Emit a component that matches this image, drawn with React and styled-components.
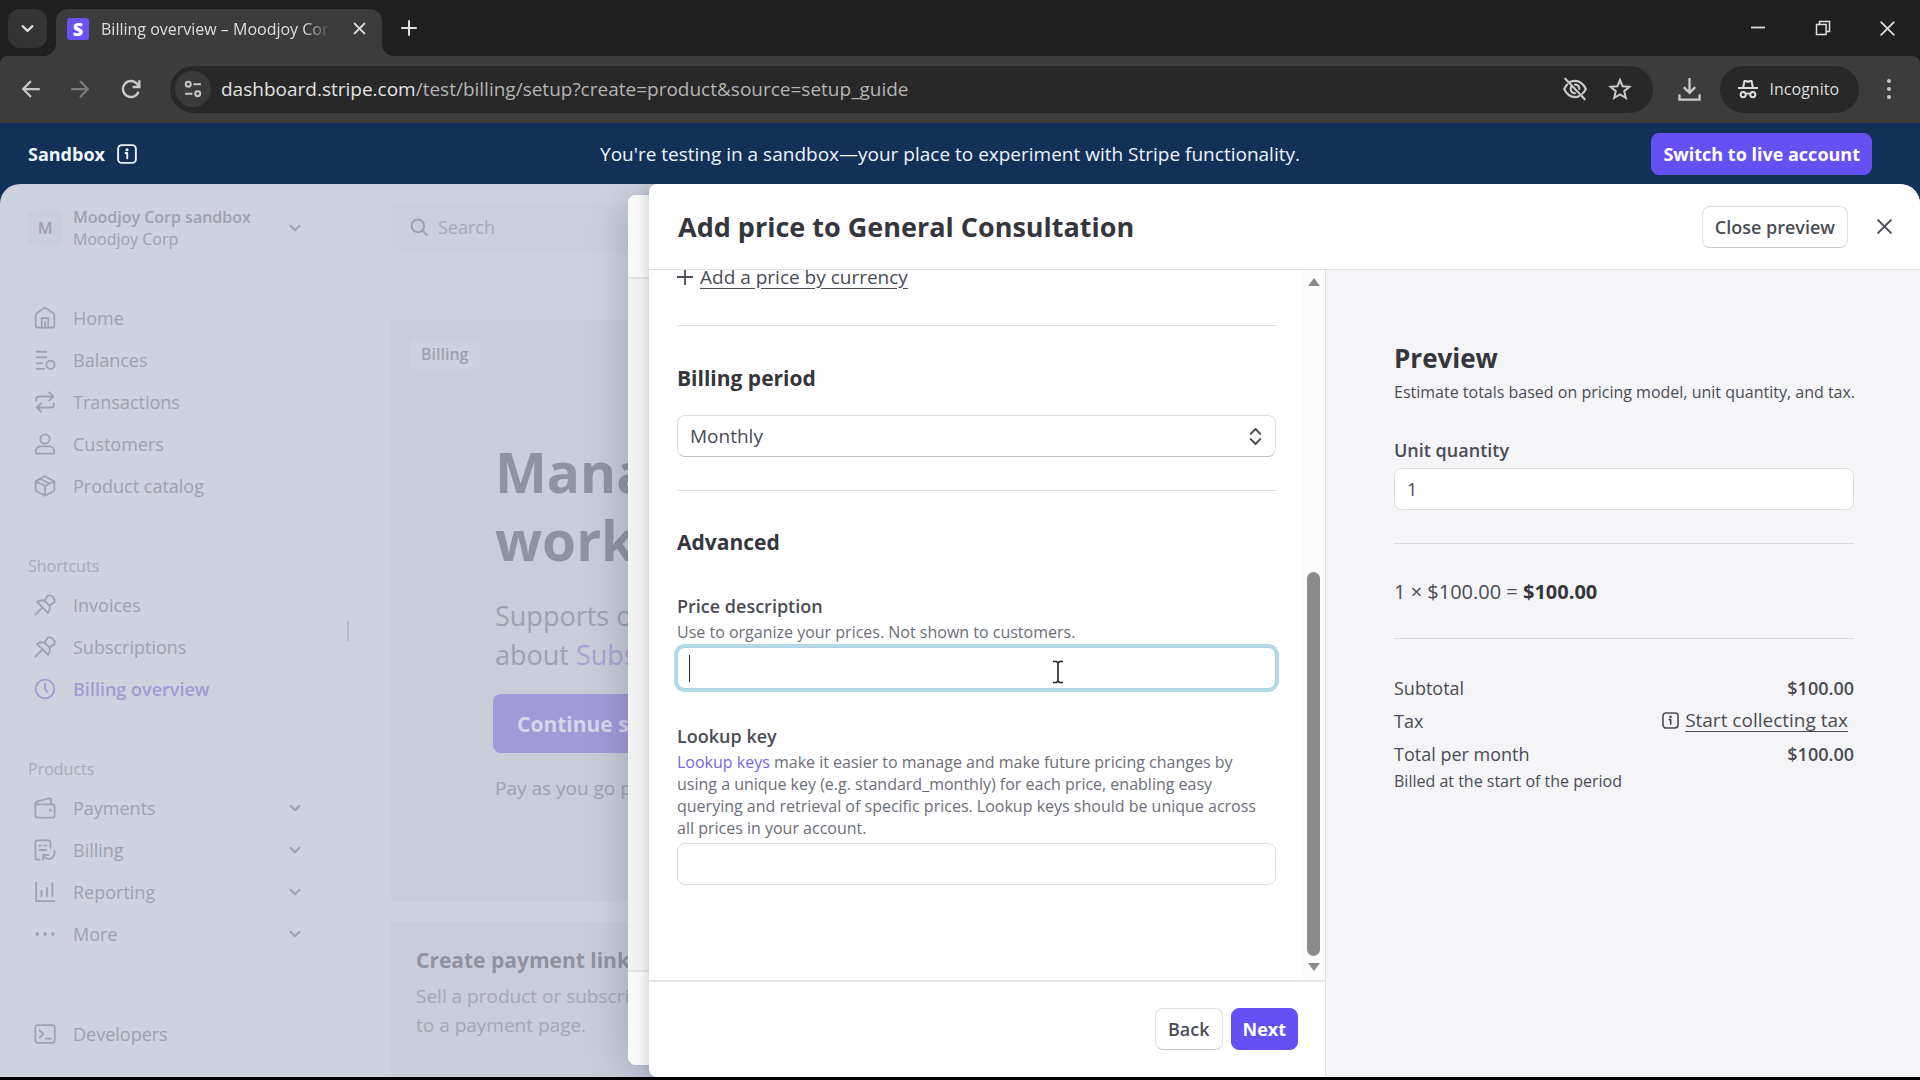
import React from 'react';
import styled, { createGlobalStyle, css } from 'styled-components';

const GlobalStyle = createGlobalStyle`
  *, *::before, *::after {
    box-sizing: border-box;
  }

  body {
    margin: 0;
    background: #000;
    font-family: 'Open Sans', 'Noto Sans', sans-serif;
    font-size: 18px;
    color: #4a4c55;
  }

  h1, h2, h3, p {
    margin: 0;
  }

  button, input, select {
    font: inherit;
    color: inherit;
  }

  button {
    cursor: pointer;
  }
`;

const Screen = styled.div`
  display: flex;
  flex-direction: column;
  height: 100vh;
  padding-bottom: 3px;
  overflow: hidden;
`;

const Svg = styled.svg`
  display: block;
  flex: none;
  fill: none;
  stroke: currentColor;
  stroke-width: ${ ({ $stroke }) => $stroke || 1.5 };
  stroke-linecap: ${ ({ $square }) => $square ? 'butt' : 'round' };
  stroke-linejoin: ${ ({ $square }) => $square ? 'miter' : 'round' };
`;

const Icon = ({ size = 22, box = 16, stroke, square, children }) => (
  <Svg
    width={ size }
    height={ size }
    viewBox={ `0 0 ${ box } ${ box }` }
    $stroke={ stroke }
    $square={ square }
    aria-hidden='true'
  >{ children }</Svg>
);

const ChevronDown = ({ size = 12, stroke = 2 }) => (
  <Icon size={ size } box={ 12 } stroke={ stroke }><path d='M1.5 3.8 6 8.2l4.5-4.4'/></Icon>
);

const Cross = ({ size = 16, stroke = 1.8 }) => (
  <Icon size={ size } stroke={ stroke }><path d='M2 2l12 12M14 2 2 14'/></Icon>
);

const InfoIcon = ({ size = 20 }) => (
  <Icon size={ size } stroke={ 1.5 }>
    <rect x='.9' y='.9' width='14.2' height='14.2' rx='3'/>
    <path d='M6.8 7.2h1.4v4.2'/>
    <circle cx='8' cy='4.6' r='.5' fill='currentColor'/>
  </Icon>
);

/* browser window */

const TabStrip = styled.div`
  display: flex;
  align-items: flex-start;
  height: 56px;
  flex: none;
  padding: 9px 16px 0 8px;
  background: #202020;
  color: #dedede;
`;

const TabSearch = styled.button`
  display: flex;
  align-items: center;
  justify-content: center;
  width: 39px;
  height: 39px;
  padding: 0;
  border: 0;
  border-radius: 12px;
  background: #343434;
`;

const Tab = styled.div`
  position: relative;
  display: flex;
  align-items: center;
  width: 326px;
  height: 47px;
  margin-left: 9px;
  padding: 0 11px 8px;
  border-radius: 12px 12px 0 0;
  background: #3c3c3c;

  &::before, &::after {
    content: '';
    position: absolute;
    bottom: 0;
    width: 12px;
    height: 12px;
  }

  &::before {
    right: 100%;
    background: radial-gradient(circle at 0 0, transparent 12px, #3c3c3c 12px);
  }

  &::after {
    left: 100%;
    background: radial-gradient(circle at 100% 0, transparent 12px, #3c3c3c 12px);
  }
`;

const Favicon = styled.span`
  display: flex;
  align-items: center;
  justify-content: center;
  width: 22px;
  height: 22px;
  border-radius: 3px;
  background: #6b52f6;
  color: #fff;
  font-size: 18px;
  font-weight: 800;
  line-height: 20px;
`;

const TabTitle = styled.span`
  flex: 1;
  margin: 0 16px 0 12px;
  overflow: hidden;
  font-size: 16px;
  line-height: 24px;
  white-space: nowrap;
  mask-image: linear-gradient(to right, #000 88%, transparent);
`;

const GhostButton = styled.button`
  display: flex;
  align-items: center;
  justify-content: center;
  flex: none;
  width: ${ ({ $width }) => $width || 36 }px;
  height: ${ ({ $height }) => $height || 38 }px;
  padding: 0;
  border: 0;
  background: none;
  opacity: ${ ({ disabled }) => disabled ? 0.45 : 1 };
`;

const WindowControls = styled.div`
  display: flex;
  margin-left: auto;
  margin-right: -16px;
`;

const ToolbarWrap = styled.div`
  flex: none;
  background: #202020;
`;

const Toolbar = styled.div`
  display: flex;
  align-items: center;
  height: 67px;
  padding: 0 13px 1px 8px;
  border-radius: 8px 8px 0 0;
  background: #3c3c3c;
  color: #c9c9c9;
`;

const AddressBar = styled.div`
  display: flex;
  align-items: center;
  flex: 1;
  height: 47px;
  margin: 0 15px 0 14px;
  padding: 0 10px 0 5px;
  border-radius: 24px;
  background: #282828;
`;

const SiteInfo = styled.button`
  display: flex;
  align-items: center;
  justify-content: center;
  width: 36px;
  height: 36px;
  padding: 0;
  border: 0;
  border-radius: 50%;
  background: #3a3a3a;
`;

const Address = styled.div`
  flex: 1;
  margin-left: 10px;
  color: #b4b4b4;
  font-size: 19px;
  line-height: 26px;

  span {
    color: #e2e2e2;
  }
`;

const Incognito = styled.button`
  display: flex;
  align-items: center;
  gap: 12px;
  height: 47px;
  margin: 0 12px 0 8px;
  padding: 0 20px 0 18px;
  border: 0;
  border-radius: 24px;
  background: #282828;
  color: #dcdcdc;
  font-size: 16px;
`;

/* sandbox banner */

const Banner = styled.div`
  display: grid;
  grid-template-columns: 1fr auto 1fr;
  align-items: center;
  height: 61px;
  flex: none;
  padding: 0 48px 0 28px;
  background: #133158;
  color: #eef4fb;
  font-size: 19px;
  line-height: 26px;
`;

const BannerLabel = styled.div`
  display: flex;
  align-items: center;
  gap: 12px;
  font-size: 18px;
  font-weight: 700;
`;

const Button = styled.button`
  height: 42px;
  padding: 0 12px;
  border: 1px solid #dfe0e3;
  border-bottom-color: #c9cace;
  border-radius: 8px;
  background: #fff;
  font-size: 18px;
  font-weight: 600;
  line-height: 24px;
  white-space: nowrap;

  ${ ({ $primary }) => $primary && css`
    padding: 0 11px;
    border-color: #6550f0;
    background: #6550f4;
    color: #fff;
    font-weight: 700;
  ` }

  ${ ({ $end }) => $end && css`
    justify-self: end;
  ` }
`;

/* dimmed dashboard */

const Workspace = styled.main`
  position: relative;
  flex: 1;
  min-height: 0;
  overflow: hidden;
  background: #133158;
`;

const Dashboard = styled.div`
  display: flex;
  height: 100%;
  border-radius: 20px 20px 0 0;
  background: #ced2de;
  color: #9da2ae;
`;

const Sidebar = styled.aside`
  display: flex;
  flex-direction: column;
  flex: none;
  width: 347px;
  padding: 22px 46px 22px 28px;
`;

const Account = styled.button`
  display: flex;
  align-items: center;
  margin-bottom: 47px;
  padding: 0;
  border: 0;
  background: none;
  text-align: left;
  font-size: 16px;
  line-height: 22px;

  strong {
    display: block;
    font-weight: 600;
  }
`;

const Avatar = styled.span`
  width: 34px;
  height: 34px;
  margin-right: 11px;
  border-radius: 6px;
  background: #cacedb;
  line-height: 34px;
  font-weight: 600;
  text-align: center;
`;

const Grow = styled.span`
  flex: 1;
`;

const NavList = styled.nav`
  display: flex;
  flex-direction: column;
  margin-bottom: ${ ({ $last }) => $last ? 0 : 48 }px;
  margin-top: ${ ({ $last }) => $last ? 'auto' : 0 };
`;

const NavHeading = styled.h3`
  margin-bottom: 7px;
  font-size: 16px;
  font-weight: 400;
  line-height: 22px;
  color: #a6abb7;
`;

const NavItem = styled.a`
  display: flex;
  align-items: center;
  gap: 17px;
  height: 42px;
  padding-left: 6px;
  color: ${ ({ $active }) => $active ? '#a29bd3' : 'inherit' };
  font-weight: ${ ({ $active }) => $active ? 600 : 400 };
  text-decoration: none;
`;

const Chevron = styled.span`
  width: 12px;
`;

const ResizeHandle = styled.div`
  align-self: center;
  width: 2px;
  height: 20px;
  background: #b5bac7;
`;

const Content = styled.section`
  flex: 1;
  min-width: 0;
  padding: 20px 0 0 42px;
`;

const Search = styled.label`
  display: flex;
  align-items: center;
  gap: 10px;
  height: 46px;
  padding-left: 19px;
  border-radius: 8px;
  background: #cbcfdb;

  input {
    width: 200px;
    padding: 0;
    border: 0;
    background: none;
  }

  input::placeholder {
    color: #a6abb7;
    opacity: 1;
  }
`;

const Card = styled.article`
  margin-top: ${ ({ $first }) => $first ? 70 : 21 }px;
  padding: ${ ({ $first }) => $first ? '19px 0 100px 18px' : '23px 0 60px 25px' };
  background: #c9cdd9;
`;

const Badge = styled.span`
  display: inline-block;
  padding: 2px 12px;
  border-radius: 4px;
  background: #cdd1dd;
  font-size: 16px;
  font-weight: 600;
  line-height: 26px;
`;

const Hero = styled.div`
  margin: 69px 0 0 86px;
  font-size: 19px;
  line-height: 26px;
  white-space: nowrap;
`;

const HeroTitle = styled.h1`
  color: #8e939f;
  font-size: 55px;
  font-weight: 700;
  line-height: 68px;
`;

const HeroText = styled.p`
  margin-top: 22px;
  font-size: 27px;
  line-height: 39px;

  a {
    color: #a9a3d6;
    text-decoration: none;
  }
`;

const HeroButton = styled.button`
  height: 59px;
  margin: 20px 0 22px -2px;
  padding: 0 24px;
  border: 0;
  border-radius: 8px;
  background: #a09ad8;
  color: #d5d6ea;
  font-size: 21px;
  font-weight: 700;
`;

const CardTitle = styled.h2`
  color: #8e939f;
  font-size: 21px;
  font-weight: 700;
  line-height: 30px;
  white-space: nowrap;
`;

const CardText = styled.p`
  margin-top: 7px;
  font-size: 19px;
  line-height: 29px;
  white-space: nowrap;
  color: #a3a8b4;
`;

/* drawers */

const BackDrawer = styled.div`
  position: absolute;
  top: 11px;
  right: 0;
  bottom: 12px;
  left: 628px;
  display: flex;
  flex-direction: column;
  border-radius: 8px;
  background: #f2f2f3;
  box-shadow: 0 6px 40px rgba(70, 80, 110, 0.35);
`;

const BackDrawerBar = styled.div`
  height: ${ ({ $height }) => $height }px;
  margin-top: ${ ({ $foot }) => $foot ? 'auto' : 0 };
  border: solid #e2e3e5;
  border-width: ${ ({ $foot }) => $foot ? '2px 0 0' : '0 0 2px' };
  border-radius: ${ ({ $foot }) => $foot ? '0 0 8px 8px' : '8px 8px 0 0' };
  background: #f8f8f9;
`;

const Drawer = styled.section`
  position: absolute;
  top: 0;
  right: 0;
  bottom: 0;
  left: 649px;
  display: flex;
  flex-direction: column;
  overflow: hidden;
  border-radius: 8px 20px 0 8px;
  background: #fff;
  box-shadow: 0 0 14px rgba(60, 66, 87, 0.25);
`;

const DrawerHeader = styled.header`
  display: flex;
  align-items: center;
  height: 86px;
  flex: none;
  padding: 0 0 0 29px;
  border-bottom: 1px solid #e0e0e2;
  color: #4a4c55;
`;

const DrawerTitle = styled.h1`
  flex: 1;
  color: #35363d;
  font-size: 27px;
  font-weight: 700;
  line-height: 36px;
`;

const DrawerBody = styled.div`
  display: flex;
  flex: 1;
  min-height: 0;
`;

const FormColumn = styled.form`
  display: flex;
  flex-direction: column;
  flex: 1;
  min-width: 0;
`;

const FormScroll = styled.div`
  display: flex;
  flex: 1;
  min-height: 0;
`;

/* anchored to its end, so the top of the form runs out of view */
const FormFields = styled.div`
  display: flex;
  flex-direction: column;
  justify-content: flex-end;
  flex: 1;
  overflow: hidden;
  padding: 0 26px 95px 28px;

  > * {
    flex: none;
  }
`;

const AddPrice = styled.button`
  display: flex;
  align-items: center;
  align-self: flex-start;
  gap: 7px;
  padding: 0;
  border: 0;
  background: none;
  font-size: 19px;
  font-weight: 500;
  line-height: 26px;

  span {
    text-decoration: underline;
    text-underline-offset: 4px;
  }
`;

const Divider = styled.hr`
  width: 100%;
  height: 1px;
  margin: ${ ({ $top, $bottom }) => `${ $top }px 0 ${ $bottom }px` };
  border: 0;
  background: #dcdde0;
`;

const SectionTitle = styled.h2`
  color: #35363d;
  font-size: 21px;
  font-weight: 700;
  line-height: 28px;
`;

const controlStyles = css`
  display: block;
  width: 100%;
  height: 42px;
  padding: 0 12px;
  border: 1px solid #dcdde0;
  border-radius: 8px;
  outline: 0;
  background: #fff;
`;

const SelectBox = styled.div`
  display: grid;
  align-items: center;
  margin-top: 23px;

  > * {
    grid-area: 1 / 1;
  }

  svg {
    justify-self: end;
    margin-right: 12px;
    pointer-events: none;
  }
`;

const Select = styled.select`
  ${ controlStyles }
  border-bottom-color: #bfc0c5;
  appearance: none;
  font-size: 19px;
  font-weight: 500;
`;

const Input = styled.input`
  ${ controlStyles }

  ${ ({ $focused }) => $focused && css`
    border-color: #a9d3e4;
    box-shadow: 0 0 0 3px #b5d9e8;
    caret-color: transparent;
  ` }
`;

const Field = styled.div`
  position: relative;
  margin-top: ${ ({ $gap }) => $gap || 0 }px;
`;

const Label = styled.label`
  display: block;
  margin-bottom: ${ ({ $gap }) => $gap || 0 }px;
  font-weight: 600;
  line-height: 26px;
`;

const Help = styled.p`
  margin: 2px 0 4px;
  padding-right: 12px;
  color: #6c6e78;
  font-size: 16px;
  line-height: 22px;

  a {
    color: #7a67e0;
    text-decoration: none;
  }
`;

const Caret = styled.span`
  position: absolute;
  bottom: 7px;
  left: 12px;
  width: 1px;
  height: 27px;
  background: #222;
`;

const Pointer = styled.svg`
  position: absolute;
  bottom: 5px;
  left: 375px;
  fill: none;
  stroke: #222;
  stroke-width: 1.6;
`;

const Scrollbar = styled.div`
  display: flex;
  flex-direction: column;
  align-items: center;
  width: 23px;
  padding: 8px 0 9px;
  background: #fcfcfc;
  color: #8b8b8b;
`;

const Thumb = styled.div`
  width: 13px;
  height: 384px;
  margin: auto 0 7px;
  border-radius: 7px;
  background: #8b8b8b;
`;

const FormFooter = styled.footer`
  display: flex;
  align-items: center;
  justify-content: flex-end;
  gap: 8px;
  height: 97px;
  flex: none;
  padding: 0 27px 2px 0;
  border-top: 2px solid #e6e6e8;
`;

const Preview = styled.aside`
  width: 595px;
  padding: 70px 66px 0 68px;
  border-left: 1px solid #dfe0e3;
  background: #f5f5f8;
`;

const PreviewTitle = styled.h2`
  margin-bottom: 5px;
  color: #35363d;
  font-size: 26px;
  font-weight: 700;
  line-height: 36px;
`;

const PreviewNote = styled.p`
  margin-bottom: ${ ({ $gap }) => $gap || 0 }px;
  font-size: 16px;
  line-height: 22px;
  white-space: nowrap;
`;

const Formula = styled.p`
  font-size: 20px;
  line-height: 26px;

  strong {
    color: #35363d;
  }
`;

const Totals = styled.table`
  width: 100%;
  border-collapse: collapse;

  th {
    padding: 0;
    text-align: left;
    font-weight: 400;
  }

  td {
    padding: 0;
    text-align: right;
    font-weight: 600;
  }

  tr {
    height: 33px;
  }
`;

const TaxLink = styled.a`
  display: inline-flex;
  align-items: center;
  gap: 6px;
  margin-right: 6px;
  color: inherit;
  font-size: 19px;
  font-weight: 400;
  line-height: 26px;
  text-decoration: none;

  span {
    text-decoration: underline;
    text-underline-offset: 4px;
  }
`;

const icons = {
  home: <path d='M1.2 6.2Q1.2 5 2.2 4.3L7 1q1-.6 2 0l4.8 3.3q1 .7 1 1.9v7q0 1.8-1.8 1.8H3q-1.8 0-1.8-1.8zM5.6 15V8h4.8v7M8 11v4'/>,
  balances: <g><path d='M2 2h7M2 6h7M2 10.5h4M2 14.5h5.5'/><circle cx='12' cy='11.5' r='3'/></g>,
  transactions: <path d='M1.6 7V6q0-2 2-2h10M11 1l3 3-3 3M14.4 9v1q0 2-2 2h-10M5 15l-3-3 3-3'/>,
  customers: <g><circle cx='8' cy='4.4' r='3.4'/><path d='M3.8 9.8h8.4q2.8 1.2 2.6 4.4-.1.8-1 .8H2.2q-.9 0-1-.8Q1 11 3.8 9.8z'/></g>,
  catalog: <path d='M8 .9l6.8 3.6v7L8 15.1l-6.800-3.600v-7zM1.200 4.500 8 8l6.800-3.500M8 8v7M4.500 2.800l6.800 3.400'/>,
  pin: <path d='M1 15l4.500-4.500M10 1.200q2-.8 3.800 1 1.800 1.800 1 3.800l-3.600 2.400q.8 3-1 5.400L2.200 5.800q2.400-1.800 5.400-1zM7.600 4.800l3.600 3.600'/>,
  clock: <g><circle cx='8' cy='8' r='6.8'/><path d='M8 4v4.2L9.600 10'/></g>,
  payments: <g><path d='M1 5.400h12.400q1.600 0 1.600 1.600v6.400q0 1.600-1.600 1.600H2.600Q1 15 1 13.400zM1 5.400Q1 3.600 2.800 3L11 1q1.400-.2 1.400 1.200v3'/><circle cx='12' cy='9.600' r='.4'/></g>,
  billing: <path d='M12 6.400V2.600Q12 1 10.400 1H2.600Q1 1 1 2.600v10.800Q1 15 2.600 15H4M4 4.800h1.400M7.600 4.800H9M4 8h5M14.800 8.400q.8 3.400-1.600 5.400-3 1.800-5.600-.8M6.400 15.200l.4-3.800 3.600.4'/>,
  reporting: <path d='M1.600 1v13.600H15M5.400 7v4M9.400 5v6M13.400 1.400V11'/>,
  more: <g fill='currentColor'><circle cx='2.400' cy='8' r='.7'/><circle cx='8' cy='8' r='.7'/><circle cx='13.600' cy='8' r='.7'/></g>,
  developers: <g><rect x='.9' y='1.600' width='14.200' height='12.800' rx='2'/><path d='M4 5.400 6.800 8 4 10.600M8.600 11.400h3.600'/></g>,
};

const mainLinks = [
  { icon: 'home', label: 'Home' },
  { icon: 'balances', label: 'Balances' },
  { icon: 'transactions', label: 'Transactions' },
  { icon: 'customers', label: 'Customers' },
  { icon: 'catalog', label: 'Product catalog' },
];

const shortcuts = [
  { icon: 'pin', label: 'Invoices' },
  { icon: 'pin', label: 'Subscriptions' },
  { icon: 'clock', label: 'Billing overview', active: true },
];

const products = [
  { icon: 'payments', label: 'Payments', expandable: true },
  { icon: 'billing', label: 'Billing', expandable: true },
  { icon: 'reporting', label: 'Reporting', expandable: true },
  { icon: 'more', label: 'More', expandable: true },
];

const NavSection = ({ title, items, last }) => (
  <NavList $last={ last } aria-label={ title }>
    { title && <NavHeading>{ title }</NavHeading> }
    { items.map(({ icon, label, active, expandable }) => (
      <NavItem key={ label } href='#' $active={ active }>
        <Icon stroke={ 1.3 }>{ icons[icon] }</Icon>
        <Grow>{ label }</Grow>
        { expandable && <Chevron><ChevronDown/></Chevron> }
      </NavItem>
    )) }
  </NavList>
);

const BrowserWindow = () => (
  <>
    <TabStrip>
      <TabSearch aria-label='Search tabs'><ChevronDown size={ 13 }/></TabSearch>
      <Tab>
        <Favicon>S</Favicon>
        <TabTitle>Billing overview – Moodjoy Corp sandbox</TabTitle>
        <GhostButton $width={ 24 } $height={ 24 } aria-label='Close tab'><Cross size={ 13 } stroke={ 2.4 }/></GhostButton>
      </Tab>
      <GhostButton $width={ 54 } aria-label='New tab'>
        <Icon size={ 16 } stroke={ 2 }><path d='M8 1v14M1 8h14'/></Icon>
      </GhostButton>
      <WindowControls>
        <GhostButton $width={ 65 } aria-label='Minimize'>
          <Icon size={ 16 } stroke={ 1.8 } square><path d='M1 7.5h14'/></Icon>
        </GhostButton>
        <GhostButton $width={ 65 } aria-label='Restore'>
          <Icon size={ 16 } stroke={ 1.5 } square><path d='M1.5 4.5h9.6v10H1.5zM4.5 4.5V1.4h10v10h-3.4'/></Icon>
        </GhostButton>
        <GhostButton $width={ 65 } aria-label='Close'><Cross size={ 17 } stroke={ 1.6 }/></GhostButton>
      </WindowControls>
    </TabStrip>
    <ToolbarWrap>
      <Toolbar>
        <GhostButton $width={ 46 } aria-label='Back'>
          <Icon size={ 20 } stroke={ 1.8 } square><path d='M15 8H2M8 1.6 1.8 8 8 14.4'/></Icon>
        </GhostButton>
        <GhostButton $width={ 52 } disabled aria-label='Forward'>
          <Icon size={ 20 } stroke={ 1.8 } square><path d='M1 8h13M8 1.6 14.2 8 8 14.4'/></Icon>
        </GhostButton>
        <GhostButton $width={ 50 } aria-label='Reload'>
          <Icon size={ 20 } stroke={ 1.9 } square><path d='M14 10.2A6.4 6.4 0 1 1 13 4l1.4 1.8M14.7 1v5.4H9.3'/></Icon>
        </GhostButton>
        <AddressBar>
          <SiteInfo aria-label='View site information'>
            <Icon size={ 18 } stroke={ 1.8 } square>
              <circle cx='3.8' cy='3.8' r='2.2'/>
              <path d='M8.5 3.8H15M1 12.2h6.5'/>
              <circle cx='12.2' cy='12.2' r='2.2'/>
            </Icon>
          </SiteInfo>
          <Address><span>dashboard.stripe.com</span>/test/billing/setup?create=product&amp;source=setup_guide</Address>
          <GhostButton $width={ 45 } aria-label='Third-party cookies blocked'>
            <Icon size={ 26 } box={ 24 } stroke={ 2 }>
              <path d='M3 2.5 21 21.5M7.4 5.6Q9.6 4.5 12 4.5q6.4 0 10 7.5-1.2 2.5-3 4.2M15.6 18.8Q14 19.5 12 19.5 5.6 19.5 2 12q1.2-2.500 2.800-4.200M9.200 9Q8 10.300 8 12q0 1.800 1.200 2.900t2.800 1.100M12 8q4 .2 4 4'/>
            </Icon>
          </GhostButton>
          <GhostButton $width={ 45 } aria-label='Bookmark this tab'>
            <Icon size={ 24 } box={ 24 } stroke={ 2 } square>
              <path d='M12 3l2.600 6.200 6.800.6-5.200 4.400 1.600 6.600-5.800-3.500-5.800 3.500 1.600-6.600L2.600 9.800l6.800-.6z'/>
            </Icon>
          </GhostButton>
        </AddressBar>
        <GhostButton $width={ 44 } aria-label='Downloads'>
          <Icon size={ 23 } box={ 24 } stroke={ 2.4 } square>
            <path d='M12 0v15M6 9.500l6 6 6-6M1.500 17v5.500h21V17'/>
          </Icon>
        </GhostButton>
        <Incognito>
          <Icon size={ 20 } box={ 20 } stroke={ 2 } square>
            <path d='M0 9h20M5 9l1.500-7H8l2 .8L12 2h1.500L15 9M8 15q2-1.200 4 0'/>
            <circle cx='5.200' cy='15.600' r='2.600'/>
            <circle cx='14.800' cy='15.600' r='2.600'/>
          </Icon>
          Incognito
        </Incognito>
        <GhostButton $width={ 36 } aria-label='Menu'>
          <Icon size={ 24 } box={ 24 }>
            <g fill='currentColor'><circle cx='12' cy='4' r='1.200'/><circle cx='12' cy='12' r='1.200'/><circle cx='12' cy='20' r='1.200'/></g>
          </Icon>
        </GhostButton>
      </Toolbar>
    </ToolbarWrap>
  </>
);

const BillingDashboard = () => (
  <Dashboard>
    <Sidebar>
      <Account>
        <Avatar>M</Avatar>
        <Grow><strong>Moodjoy Corp sandbox</strong>Moodjoy Corp</Grow>
        <Chevron><ChevronDown/></Chevron>
      </Account>
      <NavSection items={ mainLinks }/>
      <NavSection title='Shortcuts' items={ shortcuts }/>
      <NavSection title='Products' items={ products }/>
      <NavSection items={ [{ icon: 'developers', label: 'Developers' }] } last/>
    </Sidebar>
    <ResizeHandle/>
    <Content>
      <Search>
        <Icon size={ 18 } stroke={ 1.8 }><circle cx='7' cy='7' r='5.6'/><path d='M11.2 11.2 15 15'/></Icon>
        <input type='search' placeholder='Search' aria-label='Search'/>
      </Search>
      <Card $first>
        <Badge>Billing</Badge>
        <Hero>
          <HeroTitle>Manage<br/>workflows</HeroTitle>
          <HeroText>Supports one-off<br/>about <a href='#'>Subscriptions</a></HeroText>
          <HeroButton>Continue setup</HeroButton>
          <p>Pay as you go pricing</p>
        </Hero>
      </Card>
      <Card>
        <CardTitle>Create payment links</CardTitle>
        <CardText>Sell a product or subscription<br/>to a payment page.</CardText>
      </Card>
    </Content>
  </Dashboard>
);

const PriceForm = () => (
  <FormColumn onSubmit={ e => e.preventDefault() }>
    <FormScroll>
      <FormFields>
        <AddPrice type='button'>
          <Icon size={ 16 } stroke={ 1.8 }><path d='M8 0v16M0 8h16'/></Icon>
          <span>Add a price by currency</span>
        </AddPrice>
        <Divider $top={ 35 } $bottom={ 38 }/>
        <SectionTitle id='period'>Billing period</SectionTitle>
        <SelectBox>
          <Select aria-labelledby='period' defaultValue='Monthly'>
            <option>Monthly</option>
            <option>Yearly</option>
          </Select>
          <Icon size={ 17 } stroke={ 1.9 }><path d='M3.500 5.500 8 1l4.500 4.500M3.500 10.500 8 15l4.500-4.500'/></Icon>
        </SelectBox>
        <Divider $top={ 33 } $bottom={ 37 }/>
        <SectionTitle>Advanced</SectionTitle>
        <Field $gap={ 37 }>
          <Label htmlFor='description'>Price description</Label>
          <Help>Use to organize your prices. Not shown to customers.</Help>
          <Input id='description' type='text' $focused/>
          <Caret/>
          <Pointer width='12' height='24' viewBox='0 0 12 24'>
            <path d='M1 1.500h3.500L6 3l1.500-1.500H11M6 3v18M1 22.500h3.500L6 21l1.500 1.500H11'/>
          </Pointer>
        </Field>
        <Field $gap={ 34 }>
          <Label htmlFor='lookup'>Lookup key</Label>
          <Help>
            <a href='#'>Lookup keys</a> make it easier to manage and make future pricing changes by
            using a unique key (e.g. standard_monthly) for each price, enabling easy
            querying and retrieval of specific prices. Lookup keys should be unique across
            all prices in your account.
          </Help>
          <Input id='lookup' type='text'/>
        </Field>
      </FormFields>
      <Scrollbar>
        <svg width='12' height='8' viewBox='0 0 12 8'><path d='M6 0l6 8H0z' fill='currentColor'/></svg>
        <Thumb/>
        <svg width='12' height='8' viewBox='0 0 12 8'><path d='M0 0h12L6 8z' fill='currentColor'/></svg>
      </Scrollbar>
    </FormScroll>
    <FormFooter>
      <Button type='button'>Back</Button>
      <Button type='submit' $primary>Next</Button>
    </FormFooter>
  </FormColumn>
);

const PricePreview = () => (
  <Preview>
    <PreviewTitle>Preview</PreviewTitle>
    <PreviewNote $gap={ 34 }>Estimate totals based on pricing model, unit quantity, and tax.</PreviewNote>
    <Field>
      <Label htmlFor='quantity' $gap={ 5 }>Unit quantity</Label>
      <Input id='quantity' type='text' defaultValue='1'/>
    </Field>
    <Divider $top={ 33 } $bottom={ 35 }/>
    <Formula>1 × $100.00 = <strong>$100.00</strong></Formula>
    <Divider $top={ 33 } $bottom={ 32 }/>
    <Totals>
      <tbody>
        <tr><th scope='row'>Subtotal</th><td>$100.00</td></tr>
        <tr>
          <th scope='row'>Tax</th>
          <td><TaxLink href='#'><InfoIcon size={ 17 }/><span>Start collecting tax</span></TaxLink></td>
        </tr>
        <tr><th scope='row'>Total per month</th><td>$100.00</td></tr>
      </tbody>
    </Totals>
    <PreviewNote>Billed at the start of the period</PreviewNote>
  </Preview>
);

const App = () => (
  <Screen>
    <GlobalStyle/>
    <BrowserWindow/>
    <Banner>
      <BannerLabel>Sandbox <InfoIcon/></BannerLabel>
      <span>You're testing in a sandbox—your place to experiment with Stripe functionality.</span>
      <Button $primary $end>Switch to live account</Button>
    </Banner>
    <Workspace>
      <BillingDashboard/>
      <BackDrawer>
        <BackDrawerBar $height={ 84 }/>
        <BackDrawerBar $height={ 95 } $foot/>
      </BackDrawer>
      <Drawer>
        <DrawerHeader>
          <DrawerTitle>Add price to General Consultation</DrawerTitle>
          <Button>Close preview</Button>
          <GhostButton $width={ 72 } aria-label='Close'><Cross size={ 17 } stroke={ 1.9 }/></GhostButton>
        </DrawerHeader>
        <DrawerBody>
          <PriceForm/>
          <PricePreview/>
        </DrawerBody>
      </Drawer>
    </Workspace>
  </Screen>
);

export default App;
